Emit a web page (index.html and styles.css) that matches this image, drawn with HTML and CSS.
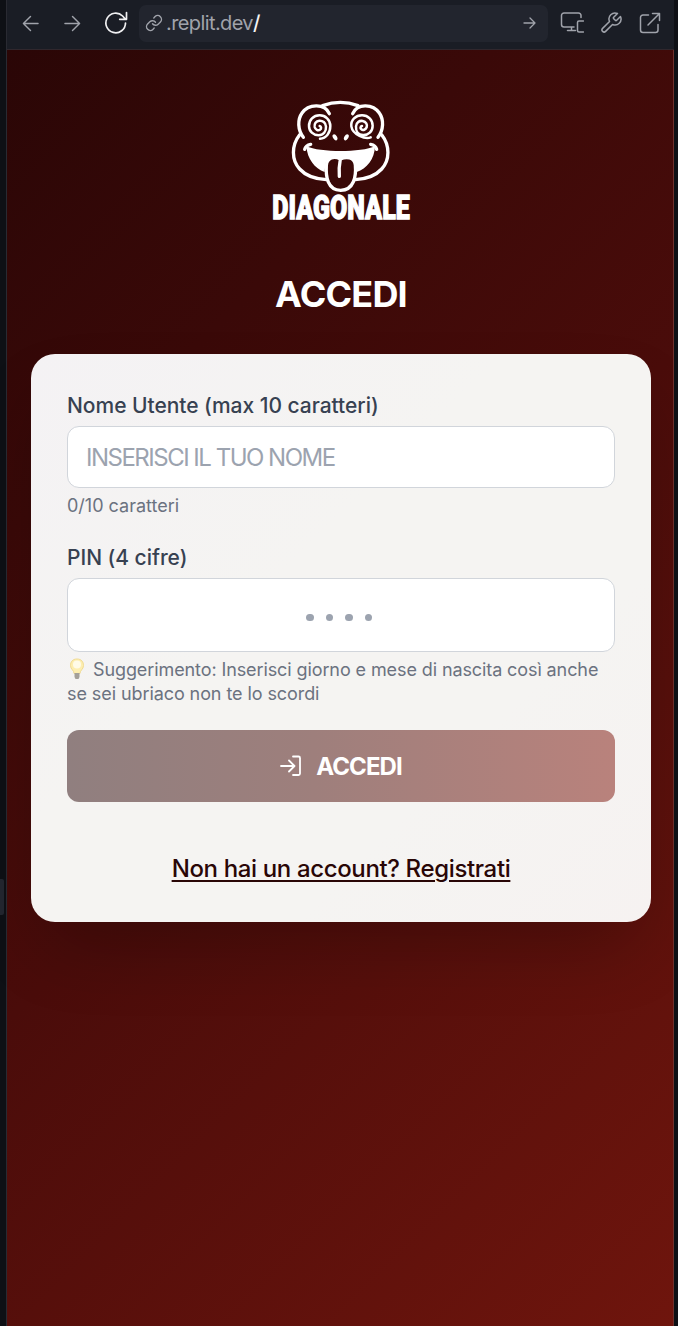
FILE: index.html
```html
<!DOCTYPE html>
<html lang="it">
<head>
<meta charset="utf-8">
<title>Diagonale</title>
<link rel="stylesheet" href="styles.css">
</head>
<body>
<div class="frame">
  <aside class="rail"><span class="handle"></span></aside>
  <div class="pane">
    <header class="toolbar">
      <svg class="icon back" viewBox="0 0 18 18"><path d="M17 9H1.500M9 1.500 1.500 9 9 16.500"/></svg>
      <svg class="icon forward" viewBox="0 0 18 18"><path d="M1 9h15.500M9 1.500 16.500 9 9 16.500"/></svg>
      <svg class="icon reload" viewBox="0 0 24 24"><path d="M21.500 12a9.800 9.800 0 1 1-2.900-7l2.900 3.300M22.500 1.500v6.800h-6.800"/></svg>
      <div class="address">
        <svg class="icon link" viewBox="0 0 24 24"><path d="M10 13a5 5 0 0 0 7.540.540l3-3a5 5 0 0 0-7.070-7.070l-1.720 1.710M14 11a5 5 0 0 0-7.540-.540l-3 3a5 5 0 0 0 7.070 7.070l1.710-1.710"/></svg>
        <span class="url">.replit.dev<b>/</b></span>
        <svg class="icon go" viewBox="0 0 12 12"><path d="M.500 6h11M6.500 1l5 5-5 5"/></svg>
      </div>
      <svg class="icon devices" viewBox="0 0 24 22"><path d="M14 15H4a2.500 2.500 0 0 1-2.500-2.500v-9A2.500 2.500 0 0 1 4 1h14.500A2.500 2.500 0 0 1 21 3.500v2M7.500 18.500h8M11.500 15v3.500M23.500 9H19a1.500 1.500 0 0 0-1.500 1.500v8A1.500 1.500 0 0 0 19 20h4.500"/></svg>
      <svg class="icon wrench" viewBox="0 0 24 24"><path d="M14.700 6.300a1 1 0 0 0 0 1.400l1.600 1.600a1 1 0 0 0 1.400 0l3.770-3.770a6 6 0 0 1-7.940 7.940l-6.910 6.910a2.120 2.120 0 0 1-3-3l6.910-6.910a6 6 0 0 1 7.940-7.940z"/></svg>
      <svg class="icon external" viewBox="0 0 22 22"><path d="M9.500 3H4a2.500 2.500 0 0 0-2.500 2.500V18A2.500 2.500 0 0 0 4 20.500h12.500A2.500 2.500 0 0 0 19 18v-5.500M13.500 1.500h7v7M20.500 1.500 9 13"/></svg>
    </header>
    <main class="page">
      <svg class="logo" viewBox="0 0 480 420" role="img" aria-label="Diagonale">
        <g class="outline">
          <path d="M188 47Q241 27 294 47"/>
          <path d="M208 71C194 38 144 42 126 69C112 89 113 120 130 142"/>
          <path d="M278 71C292 38 340 42 358 69C372 89 371 120 354 142"/>
          <path d="M119 134C94 166 94 210 119 237C137 257 165 267 199 269"/>
          <path d="M365 134C390 166 390 210 365 237C347 257 319 267 286 269"/>
        </g>
        <g class="spiral">
          <path d="M180 146C199 145 211 128 211 108C211 89 196 76 179 76C160 76 147 90 147 108C147 124 160 136 176 136C190 136 199 124 198 110C197 98 188 91 178 92C168 93 162 102 164 111C166 119 174 123 180 119C185 116 184 109 179 108"/>
          <path d="M332 142C316 148 278 135 274 109C272 90 287 76 306 76C325 76 338 90 338 107C338 124 325 136 309 135C295 134 287 123 288 109C289 98 298 91 308 93C318 95 323 103 320 112C317 119 309 122 304 118C300 115 301 109 306 108"/>
        </g>
        <ellipse class="fill" cx="225" cy="142" rx="6" ry="10" transform="rotate(-30 225 142)"/>
        <ellipse class="fill" cx="259" cy="142" rx="6" ry="10" transform="rotate(30 259 142)"/>
        <path class="fill" d="M139 169C180 188 304 188 345 169C344 207 320 237 290 246L286 220Q278 201 262 203L242 209L222 203Q202 200 196 222L194 246C164 236 142 207 139 169Z"/>
        <path class="smile" d="M134 178Q137 166 152 163M350 178Q347 166 332 163"/>
        <path class="tongue" d="M241 207C222 197 201 203 199 226C197 259 202 300 242 301C282 300 289 259 286 224C283 202 260 198 241 207C238 223 236 239 238 259"/>
        <text class="wordmark" x="0" y="0" textLength="412" lengthAdjust="spacingAndGlyphs" transform="translate(37 386)">DIAGONALE</text>
      </svg>
      <h1 class="title"><span>ACCEDI</span></h1>
      <form class="card">
        <label class="label name-label" for="name">Nome Utente (max 10 caratteri)</label>
        <input class="field name" id="name" placeholder="INSERISCI IL TUO NOME">
        <p class="hint count">0/10 caratteri</p>
        <label class="label pin-label" for="pin">PIN (4 cifre)</label>
        <div class="field pin" id="pin"><i></i><i></i><i></i><i></i></div>
        <p class="hint tip"><svg class="bulb" viewBox="0 0 20 22"><path class="glass" d="M10 1C5.500 1 3.500 4 3.500 7.500c0 4 3.500 4.500 3.500 8h6c0-3.500 3.500-4 3.500-8C16.500 4 14.500 1 10 1z"/><ellipse class="glow" cx="10" cy="6.500" rx="4" ry="4"/><path class="base" d="M7.500 15h5v4L11.500 21h-3L7.500 19z"/></svg><span class="tip-first">Suggerimento: Inserisci giorno e mese di nascita così anche</span><br><span class="tip-second">se sei ubriaco non te lo scordi</span></p>
        <button class="submit" type="button">
          <svg class="login" viewBox="0 0 22 22"><path d="M13 1.500h5.500a1.500 1.500 0 0 1 1.500 1.500v15.500a1.500 1.500 0 0 1-1.500 1.500H13M1 11h13M9 5.500l5.500 5.500L9 16.500"/></svg>
          <span>ACCEDI</span>
        </button>
        <a class="register"><span>Non hai un account? Registrati</span></a>
      </form>
    </main>
  </div>
  <aside class="edge"></aside>
</div>
</body>
</html>
```

FILE: styles.css
```css
* { box-sizing: border-box; }
body { margin: 0; background: #0e1117; font-family: Inter, "Liberation Sans", sans-serif; }
.frame { display: grid; grid-template-columns: 7px 667px 4px; height: 1326px; overflow: hidden; }
.rail { background: #0e1015; border-right: 1px solid #292a32; padding-top: 879px; }
.handle { display: block; width: 4px; height: 36px; background: #23262f; border-radius: 0 2px 2px 0; }
.edge { background: #0e1015; }
.pane { display: flex; flex-direction: column; }
.toolbar { height: 50px; flex: none; background: #1a1d25; border-bottom: 1px solid #30272d; display: flex; align-items: center; padding: 0 0 3px 15px; }
.icon { fill: none; stroke: #a0a3ab; stroke-width: 1.5; stroke-linecap: round; stroke-linejoin: round; flex: none; }
.back { width: 17px; height: 17px; }
.forward { width: 17px; height: 17px; margin-left: 25px; }
.reload { width: 24px; height: 24px; margin-left: 23px; stroke: #f0f0f2; stroke-width: 1.7; }
.address { width: 409px; height: 37px; margin-left: 11px; background: #22252e; border-radius: 7px; display: flex; align-items: center; padding: 0 12px 0 6px; }
.link { width: 18px; height: 18px; stroke-width: 1.9; }
.url { margin-left: 3px; color: #a0a3ab; font-size: 20px; line-height: 28px; letter-spacing: -.6px; }
.url b { color: #f4f4f5; font-weight: 500; }
.go { width: 13px; height: 12px; margin-left: auto; stroke-width: 1.3; }
.devices { width: 24px; height: 22px; margin-left: 12px; }
.wrench { width: 24px; height: 24px; margin-left: 15px; }
.external { width: 22px; height: 22px; margin-left: 16px; }
.page { flex: 1; display: flex; flex-direction: column; align-items: center; padding: 40px 0 0 2px; background: linear-gradient(135deg, #2a0606 0%, #4a0c0a 50%, #6f150d 100%); border-right: 1px solid #6d302c; }
.logo { width: 160px; height: 140px; flex: none; display: block; margin-right: 2px; overflow: visible; }
.outline, .spiral, .smile, .tongue { fill: none; stroke: #fff; stroke-width: 10; stroke-linecap: round; stroke-linejoin: round; }
.spiral { stroke-width: 7.5; }
.fill { fill: #fff; }
.tongue { fill: #390908; }
.wordmark { fill: #fff; stroke: #fff; stroke-width: 4; font: 900 101px Roboto, sans-serif; }
.title { margin: 40px 0 0; height: 48px; color: #fff; font-size: 36px; line-height: 48px; font-weight: 650; letter-spacing: -.8px; }
.card { width: 620px; height: 568px; margin-top: 36px; padding: 37px 36px 36px; border-radius: 24px; display: flex; flex-direction: column; background: linear-gradient(135deg, #f4f2f4, #f5f4f2 40%, #f5f4f2 70%, #f6f2f1); box-shadow: 0 36px 72px -18px rgb(0 0 0 / 25%); }
.label { color: #374151; font-size: 21px; line-height: 30px; font-weight: 500; white-space: nowrap; letter-spacing: -.03px; }
.field { width: 548px; border: 1px solid #d1d5db; border-radius: 12px; background: #fff; flex: none; }
.name { height: 62px; margin-top: 5px; padding: 0 18px; font: 400 24px Inter, sans-serif; letter-spacing: -1.5px; }
.name::placeholder { color: #9ca3af; opacity: 1; }
.hint { margin: 6px 0 0; color: #6b7280; font-size: 18px; line-height: 24px; white-space: nowrap; }
.tip-first { letter-spacing: -.1px; }
.tip-second { letter-spacing: -.08px; }
.pin-label { margin-top: 25px; }
.pin { height: 74px; margin-top: 5px; display: flex; justify-content: center; align-items: center; gap: 12px; padding: 5px 4px 0 0; }
.pin i { width: 7.500px; height: 7.500px; border-radius: 50%; background: #9ca3af; }
.bulb { width: 20px; height: 22px; vertical-align: -4px; margin-right: 6px; }
.glass { fill: #fdeeb0; stroke: #f1db91; stroke-width: 1; }
.glow { fill: #fffbe8; }
.base { fill: #a4a099; }
.submit { height: 72px; margin-top: 24px; flex: none; border: 0; border-radius: 12px; color: #fff; background: linear-gradient(90deg, #907f7f, #9e7f7c 45%, #b9827c); display: flex; align-items: center; justify-content: center; gap: 14px; font: 650 24px Inter, sans-serif; letter-spacing: -.95px; padding: 0; }
.login { width: 22px; height: 22px; fill: none; stroke: #fff; stroke-width: 1.8; stroke-linecap: round; stroke-linejoin: round; }
.register { margin-top: 49px; text-align: center; color: #290606; font-size: 24px; line-height: 36px; font-weight: 500; letter-spacing: -.36px; text-decoration: underline; text-decoration-thickness: 2px; text-underline-offset: 3px; white-space: nowrap; }
```
